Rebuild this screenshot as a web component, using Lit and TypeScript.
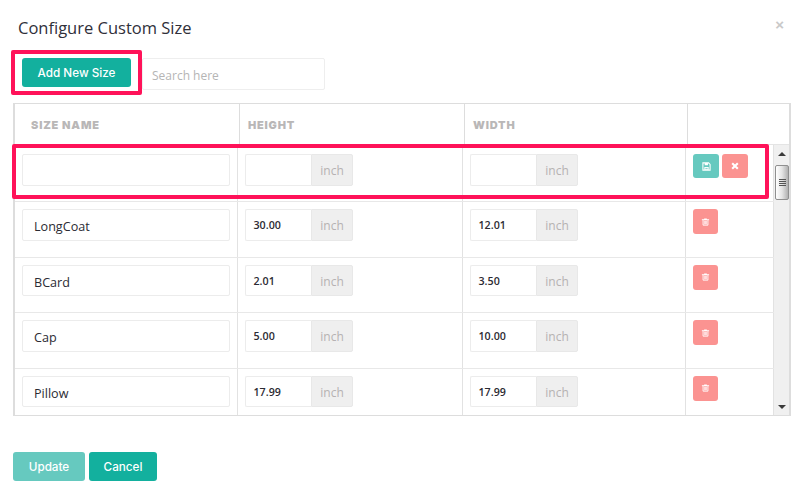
import { LitElement, html, css, svg } from "lit";
import { customElement } from "lit/decorators.js";

const saveIcon = svg`<svg viewBox="0 0 10 10" width="9" height="9"><path fill="none" stroke="#fff" stroke-width="1.2" d="M1 1h6.300L9 2.700V9H1z"/><path fill="#fff" d="M3 1h3.600v2.600H3zM2.600 5.600h4.800V9H2.600z"/><path fill="#8fd8d0" d="M3.700 6.600h2.600v1.400H3.700z"/></svg>`;
const closeIcon = svg`<svg viewBox="0 0 10 10" width="8" height="8"><path stroke="#fff" stroke-width="2.600" d="M1.500 1.500l7 7M8.500 1.500l-7 7"/></svg>`;
const trashIcon = svg`<svg viewBox="0 0 10 10" width="9" height="10"><path fill="#fff" d="M1 2h8v1H1zM3.500 1h3v1h-3z"/><path fill="none" stroke="#fff" stroke-width="1" d="M2.300 3v5.500h5.400V3"/><path fill="#fdd" d="M3.400 3.500h3.200v4.200H3.400z"/></svg>`;

const rows = [
  { name: "LongCoat", h: "30.00", w: "12.01" },
  { name: "BCard", h: "2.01", w: "3.50" },
  { name: "Cap", h: "5.00", w: "10.00" },
  { name: "Pillow", h: "17.99", w: "17.99" },
];

@customElement("app-root")
export class AppRoot extends LitElement {
  static styles = css`
    :host {
      display: block;
      position: relative;
      width: 802px;
      height: 499px;
      background: #fff;
      overflow: hidden;
      font-family: "Open Sans", "Liberation Sans", sans-serif;
      color: #2b2b33;
    }
    * { box-sizing: border-box; }
    .modal { display: flex; flex-direction: column; padding: 17px 11px 0 13px; }
    .head { display: flex; justify-content: space-between; height: 41px; padding-left: 5px; }
    h1 { margin: 0; font-size: 16.500px; font-weight: 400; line-height: 22px; color: #30303a; }
    .close { font-size: 15px; line-height: 1; color: #c9c9c9; margin-right: 7px; font-family: "Liberation Sans", sans-serif; font-weight: 700; }
    .toolbar { display: flex; align-items: flex-start; height: 45px; padding-left: 9px; gap: 11px; }
    .btn {
      display: flex; align-items: center; justify-content: center;
      font-family: Inter, "Liberation Sans", sans-serif; font-weight: 500; font-size: 11.700px;
      color: #fff; background: #13b09e; border-radius: 3px; height: 29px;
    }
    .add { width: 109px; }
    .search {
      width: 183px; height: 32px; border: 1px solid #eee; border-radius: 2px;
      padding-left: 9px; font-size: 12px; line-height: 33px; color: #b5b5b5;
    }
    .table {
      width: 778px; height: 313px;
      border: 1px solid #ddd; border-left-width: 2px; border-right-width: 2px;
      display: flex; flex-direction: column;
    }
    .thead {
      flex: none;
      display: grid; grid-template-columns: 225px 225px 223px 1fr;
      height: 41px; border-bottom: 1px solid #e4e4e4;
    }
    .th {
      font-family: Inter, "Liberation Sans", sans-serif; font-weight: 900; font-size: 11px;
      letter-spacing: 0.8px; color: #b9b7b7; padding: 1px 8px 0 8px; display: flex; align-items: center; border-right: 1px solid #ddd;
    }
    .th:first-child { padding-left: 16px; }
    .th:last-child { border-right: 0; }
    .scroller { display: flex; flex: 1; min-height: 0; }
    .tbody { width: 759px; display: flex; flex-direction: column; overflow: hidden; }
    .row {
      flex: none; display: grid; grid-template-columns: 223px 225px 223px 88px;
      height: 55.500px; border-bottom: 1px solid #e8e8e8;
    }
    .row.first { height: 57px; }
    .row:last-child { border-bottom: 0; }
    .cell { border-right: 1px solid #e2e2e2; padding: 7px 7px 0 7px; }
    .first .cell { padding-top: 9px; }
    .name {
      width: 208px; height: 31.500px; border: 1px solid #ececec; border-radius: 2px;
      padding-left: 11px; font-size: 12.600px; line-height: 33px; color: #2b2b33;
    }
    .group { display: flex; width: 108px; height: 31.500px; }
    .val {
      width: 66px; border: 1px solid #ececec; border-right: 0; border-radius: 2px 0 0 2px;
      padding-left: 7.500px; font-size: 10.700px; line-height: 31px; font-weight: 600; color: #2b2b33;
    }
    .unit {
      width: 42px; background: #efefef; border: 1px solid #e8e8e8; border-radius: 0 2px 2px 0;
      font-size: 12px; color: #b6b2b2; text-align: center; line-height: 31px;
    }
    .cell.act { display: flex; gap: 3px; align-items: flex-start; }
    .first .cell.act { padding-top: 9px; }
    .ab {
      width: 26px; height: 24px; border-radius: 3px; display: flex; align-items: center; justify-content: center;
    }
    .ab.save { background: #66c9bf; }
    .ab.del { background: #fb9391; }
    .ab.trash { width: 25px; height: 25px; }
    .bar {
      width: 15px; background: #f0f0f0; display: flex; flex-direction: column; align-items: flex-end;
    }
    .arrow { width: 0; height: 0; border-left: 4px solid transparent; border-right: 4px solid transparent; margin-right: 3px; }
    .arrow.up { border-bottom: 4px solid #3a3a3a; margin-top: 7px; margin-bottom: 9px; }
    .arrow.down { border-top: 4px solid #3a3a3a; margin-top: auto; margin-bottom: 6px; }
    .thumb {
      width: 14px; height: 35px; border: 1px solid #8f8f8f; border-radius: 2px;
      background: linear-gradient(90deg, #fff, #e4e4e4 50%, #b0b0b0);
      display: flex; flex-direction: column; align-items: center; justify-content: center; gap: 1px;
    }
    .thumb i { display: block; width: 7px; height: 1px; background: #555; }
    .foot { display: flex; gap: 4px; margin-top: 36px; }
    .btn.update { width: 72px; background: #66c9bf; }
    .btn.cancel { width: 68px; }
    .pink { position: absolute; border: 4px solid #ff1259; border-radius: 2px; pointer-events: none; }
    .p1 { left: 11px; top: 50px; width: 131px; height: 45px; }
    .p2 { left: 12px; top: 144px; width: 757px; height: 55px; }
  `;

  private group(v: string) {
    return html`<div class="group"><div class="val">${v}</div><div class="unit">inch</div></div>`;
  }

  render() {
    return html`
      <div class="modal">
        <div class="head"><h1>Configure Custom Size</h1><span class="close">×</span></div>
        <div class="toolbar">
          <div class="btn add">Add New Size</div>
          <div class="search">Search here</div>
        </div>
        <div class="table">
          <div class="thead">
            <div class="th">SIZE NAME</div><div class="th">HEIGHT</div><div class="th">WIDTH</div><div class="th"></div>
          </div>
          <div class="scroller">
            <div class="tbody">
              <div class="row first">
                <div class="cell"><div class="name"></div></div>
                <div class="cell">${this.group("")}</div>
                <div class="cell">${this.group("")}</div>
                <div class="cell act"><div class="ab save">${saveIcon}</div><div class="ab del">${closeIcon}</div></div>
              </div>
              ${rows.map(
                (r) => html`<div class="row">
                  <div class="cell"><div class="name">${r.name}</div></div>
                  <div class="cell">${this.group(r.h)}</div>
                  <div class="cell">${this.group(r.w)}</div>
                  <div class="cell act"><div class="ab del trash">${trashIcon}</div></div>
                </div>`
              )}
            </div>
            <div class="bar">
              <div class="arrow up"></div>
              <div class="thumb"><i></i><i></i><i></i><i></i></div>
              <div class="arrow down"></div>
            </div>
          </div>
        </div>
        <div class="foot">
          <div class="btn update">Update</div>
          <div class="btn cancel">Cancel</div>
        </div>
      </div>
      <div class="pink p1"></div>
      <div class="pink p2"></div>
    `;
  }
}
